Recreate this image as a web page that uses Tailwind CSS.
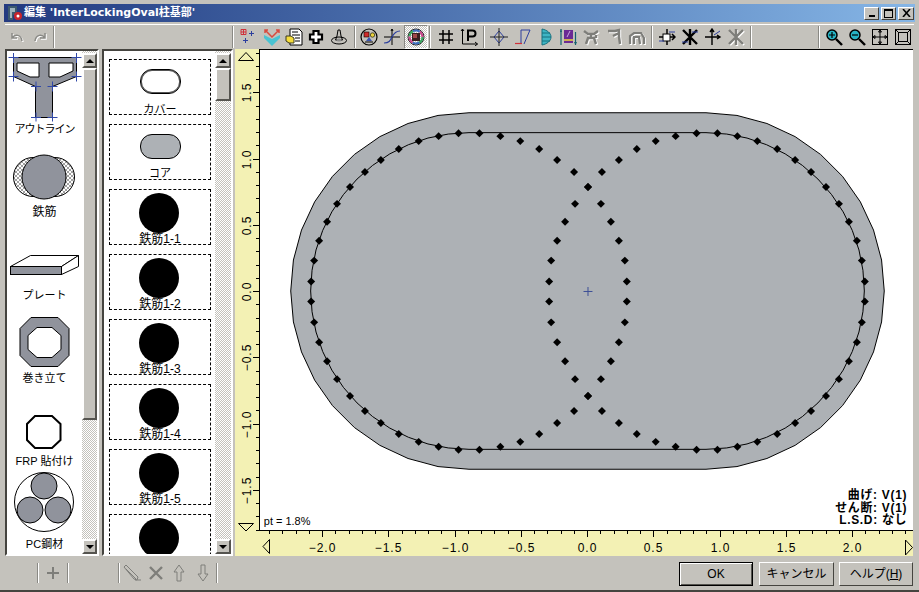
<!DOCTYPE html>
<html lang="ja">
<head>
  <meta charset="UTF-8">
  <title>編集 'InterLockingOval柱基部'</title>
  <script src="https://cdn.jsdelivr.net/npm/@tailwindcss/browser@4"></script>
</head>
<body class="w-[919px] h-[592px] overflow-hidden bg-[#c4c2bc] font-['Liberation_Sans','Noto_Sans_CJK_JP',sans-serif] text-black">
  <div class="w-[919px] h-[592px] flex flex-col px-[5px] pt-[4px] border-b-2 border-[#45443f]">

    <!-- Title bar -->
    <div class="h-[18px] -mx-[1px] flex items-center bg-linear-to-r from-[#233a80] to-[#86b6e6]">
      <svg class="ml-[3px] w-[16px] h-[16px]" viewBox="0 0 16 16">
        <path d="M1 1h9v9H6v5H1z" fill="#3d5a6e"/>
        <path d="M3 3h5v4H5v6H3z" fill="#9fb4bd"/>
        <circle cx="11" cy="11" r="4" fill="#c8242c"/>
        <circle cx="11" cy="11" r="1.5" fill="#fff"/>
      </svg>
      <span class="ml-[1px] text-[11px] font-bold text-white font-['DejaVu_Sans','Noto_Sans_CJK_JP',sans-serif]">編集 'InterLockingOval柱基部'</span>
      <div class="ml-auto mr-[1px] flex items-center gap-[2px]">
        <div class="w-[15px] h-[13px] flex items-end justify-center pb-[2px] bg-[#c4c2bc] border border-t-white border-l-white border-r-[#45443f] border-b-[#45443f]"><div class="w-[6px] h-[2px] bg-black"></div></div>
        <div class="w-[15px] h-[13px] flex items-center justify-center bg-[#c4c2bc] border border-t-white border-l-white border-r-[#45443f] border-b-[#45443f]"><div class="w-[9px] h-[9px] border border-t-2 border-black"></div></div>
        <div class="w-[16px] h-[13px] flex items-center justify-center bg-[#c4c2bc] border border-t-white border-l-white border-r-[#45443f] border-b-[#45443f]">
          <svg class="w-[9px] h-[8px]" viewBox="0 0 9 8"><path d="M1 0l7 8M8 0L1 8" stroke="#000" stroke-width="1.6"/></svg>
        </div>
      </div>
    </div>

    <!-- Top toolbar -->
    <div class="h-[25px] mt-[2px] flex items-center border-t border-white">
      <div class="w-[24px] flex justify-center"><svg class="w-[18px] h-[18px]" viewBox="0 0 18 18" fill="none" stroke-width="1.5"><path d="M4 5v5h5M4 10c3-4 9-4 10 3" stroke="#fff" transform="translate(1 1)"/><path d="M4 5v5h5M4 10c3-4 9-4 10 3" stroke="#8a8a86"/></svg></div>
      <div class="w-[23px] flex justify-center"><svg class="w-[18px] h-[18px]" viewBox="0 0 18 18" fill="none" stroke-width="1.5"><path d="M14 5v5H9M14 10c-3-4-9-4-10 3" stroke="#fff" transform="translate(1 1)"/><path d="M14 5v5H9M14 10c-3-4-9-4-10 3" stroke="#8a8a86"/></svg></div>
      <div class="ml-[1px] w-[2px] h-[22px] bg-[#8a8984] border-r border-white"></div>
      <div class="w-[178px]"></div>
      <div class="w-[2px] h-[22px] bg-[#8a8984] border-r border-white"></div>

      <div class="ml-[3px] w-[23px] flex justify-center"><svg class="w-[18px] h-[18px]" viewBox="0 0 18 18" fill="none"><path d="M1 1.500h5v5H1zM3.500 1v5M1 4h5" stroke="#d0313a"/><path d="M9 5.500h5M11.500 3v5M3 12.500h5M5.500 10v5" stroke="#2c3f9e"/></svg></div>
      <div class="w-[23px] flex justify-center"><svg class="w-[18px] h-[18px]" viewBox="0 0 18 18"><path d="M1 7l8 4 8-4v3l-8 8-8-8z" fill="#49c3d2"/><path d="M2 5V2h3M2 2l7 7 7-7M13 2h3v3" stroke="#d94a3e" stroke-width="1.5" fill="none"/></svg></div>
      <div class="w-[22px] flex justify-center"><svg class="w-[18px] h-[18px]" viewBox="0 0 18 18"><path d="M5 1h9l3 3v13H5z" fill="#fff" stroke="#000"/><path d="M7 4h6M7 7h8M10 10h5M10 13h5" stroke="#000"/><path d="M1 8h5l3 2v5H4l-3-2z" fill="#f5dc3b" stroke="#3a3a20"/></svg></div>
      <div class="w-[23px] flex justify-center"><svg class="w-[18px] h-[18px]" viewBox="0 0 18 18"><path d="M6.500 3h5v3.500H15v5h-3.500V15h-5v-3.500H3v-5h3.500z" fill="#fff" stroke="#000" stroke-width="2.200"/></svg></div>
      <div class="w-[23px] flex justify-center"><svg class="w-[18px] h-[18px]" viewBox="0 0 18 18" fill="none" stroke="#000"><ellipse cx="9" cy="12.500" rx="7.500" ry="3.500"/><path d="M8 2h2l1 6 1.500 4h-7L7 8z"/><ellipse cx="9" cy="12" rx="2.500" ry="1.500" fill="#8c8c8c" stroke="none"/></svg></div>
      <div class="ml-[3px] w-[2px] h-[22px] bg-[#8a8984] border-r border-white"></div>

      <div class="ml-[2px] w-[23px] flex justify-center"><svg class="w-[18px] h-[18px]" viewBox="0 0 18 18"><circle cx="9" cy="9" r="8" fill="#c4c2bc" stroke="#000" stroke-width="1.200"/><rect x="4" y="4" width="5" height="5" fill="#d02c2c" stroke="#000" stroke-width=".6"/><circle cx="12.500" cy="7" r="2.200" fill="#e8d23c" stroke="#000" stroke-width=".6"/><path d="M9 9l3 4H6z" fill="#3a55b0"/><path d="M5 14h8" stroke="#000"/></svg></div>
      <div class="w-[23px] flex justify-center"><svg class="w-[18px] h-[18px]" viewBox="0 0 18 18" fill="none"><path d="M9 17V1M8 3l1-2 1 2M1 9h16" stroke="#000"/><path d="M1 15c5 0 6-2 8-6s4-6 8-6" stroke="#2c3f9e" stroke-width="1.200"/></svg></div>
      <div class="w-[24px] h-[24px] flex items-center justify-center border border-t-[#8a8984] border-l-[#8a8984] border-b-white border-r-white bg-[repeating-conic-gradient(#c4c2bc_0_25%,#fff_0_50%)] bg-[length:2px_2px]"><svg class="w-[18px] h-[18px]" viewBox="0 0 18 18"><circle cx="9" cy="9" r="8" fill="none" stroke="#222" stroke-width="1"/><circle cx="9" cy="9" r="6.500" fill="none" stroke="#3aa860" stroke-width="2.200" stroke-dasharray="7 13.400"/><circle cx="9" cy="9" r="6.500" fill="none" stroke="#c84a8c" stroke-width="2.200" stroke-dasharray="7 13.400" stroke-dashoffset="7"/><circle cx="9" cy="9" r="6.500" fill="none" stroke="#3f6fc0" stroke-width="2.200" stroke-dasharray="7 13.400" stroke-dashoffset="14"/><rect x="5" y="5" width="8" height="8" fill="#3a2020"/><rect x="6" y="6" width="4" height="4" fill="#a04848"/></svg></div>
      <div class="ml-[1px] w-[2px] h-[22px] bg-[#8a8984] border-r border-white"></div>

      <div class="ml-[3px] w-[24px] flex justify-center"><svg class="w-[18px] h-[18px]" viewBox="0 0 18 18" fill="none" stroke="#000" stroke-width="1.500"><path d="M6 2v14M12 2v14M2 6h14M2 12h14"/></svg></div>
      <div class="w-[23px] flex justify-center"><svg class="w-[18px] h-[18px]" viewBox="0 0 18 18" fill="none" stroke="#000"><path d="M2.500 1v15h15M1 3l1.500-2L4 3M15 14l2.500 2-2.500 2"/><path d="M8 13V2.500h4.500a2.500 2.500 0 0 1 0 6H8" stroke-width="2"/></svg></div>
      <div class="ml-[3px] w-[2px] h-[22px] bg-[#8a8984] border-r border-white"></div>

      <div class="ml-[2px] w-[24px] flex justify-center"><svg class="w-[18px] h-[18px]" viewBox="0 0 18 18" fill="none" stroke="#2c3f9e"><path d="M9 3l5 6-5 6-5-6z"/><path d="M9 0v18M0 9h18" stroke="#222"/></svg></div>
      <div class="w-[24px] flex justify-center"><svg class="w-[18px] h-[18px]" viewBox="0 0 18 18" fill="none"><path d="M7 2h9M16 2l-6 14M7 2v14" stroke="#2c3f9e"/><path d="M1 15.500h7" stroke="#d0313a" stroke-width="1.200"/></svg></div>
      <div class="w-[22px] flex justify-center"><svg class="w-[18px] h-[18px]" viewBox="0 0 18 18"><path d="M5 1c5 1 9 4 9 8s-4 7-9 8z" fill="#3fb5c4" stroke="#16707e"/><path d="M5 5h8M5 9h9M5 13h8" stroke="#16707e"/></svg></div>
      <div class="w-[22px] flex justify-center"><svg class="w-[18px] h-[18px]" viewBox="0 0 18 18"><rect x="5" y="2" width="9" height="13" fill="#6b2a94"/><path d="M5 12h9" stroke="#f0dc3c" stroke-width="1.500"/><path d="M11 3L8 9" stroke="#c8a8e0"/><path d="M2 1v16M16.500 4v13" stroke="#14606e" stroke-width="1.200"/><path d="M1 4l1-3 1 3M15 14l1.500 3 1.500-3" fill="#14606e"/></svg></div>
      <div class="w-[24px] flex justify-center"><svg class="w-[18px] h-[18px]" viewBox="0 0 18 18" fill="none" stroke-width="2.400"><path d="M2 3l4 3h6l4-3M9 6v5M4 16l2-6h6l2 6M14 7v3" stroke="#fff" transform="translate(1 1)"/><path d="M2 3l4 3h6l4-3M9 6v5M4 16l2-6h6l2 6M14 7v3" stroke="#7e7e7a"/></svg></div>
      <div class="w-[23px] flex justify-center"><svg class="w-[18px] h-[18px]" viewBox="0 0 18 18" fill="none" stroke-width="2.400"><path d="M2 3h7l4-1v7l1 7M13 5L7 8" stroke="#fff" transform="translate(1 1)"/><path d="M2 3h7l4-1v7l1 7M13 5L7 8" stroke="#7e7e7a"/></svg></div>
      <div class="w-[23px] flex justify-center"><svg class="w-[18px] h-[18px]" viewBox="0 0 18 18" fill="none" stroke-width="2.200"><path d="M2 16V8l4-3h7l3 5v6M6 16V9h5l1 7" stroke="#fff" transform="translate(1 1)"/><path d="M2 16V8l4-3h7l3 5v6M6 16V9h5l1 7" stroke="#7e7e7a"/></svg></div>
      <div class="ml-[2px] w-[2px] h-[22px] bg-[#8a8984] border-r border-white"></div>

      <div class="ml-[2px] w-[24px] flex justify-center"><svg class="w-[18px] h-[18px]" viewBox="0 0 18 18" fill="none"><path d="M9 1v16M1 9h16M14 6l3 3-3 3" stroke="#000" stroke-width="1.500"/><rect x="5" y="6" width="7" height="7" fill="#fff" stroke="#000"/><path d="M1 13h5M11 4h6" stroke="#2c3f9e"/></svg></div>
      <div class="w-[23px] flex justify-center"><svg class="w-[18px] h-[18px]" viewBox="0 0 18 18" fill="none"><path d="M2 2l14 14M16 2L2 16M9 1v16" stroke="#000" stroke-width="2.400"/><path d="M1 14h6M11 4h6" stroke="#2c3f9e"/></svg></div>
      <div class="w-[23px] flex justify-center"><svg class="w-[18px] h-[18px]" viewBox="0 0 18 18" fill="none"><path d="M8 2v15M1 9h14M13 7l3 2-3 2M6 4l2-3 2 3" stroke="#000" stroke-width="1.400"/><path d="M10 7l6-4" stroke="#2c3f9e"/></svg></div>
      <div class="w-[23px] flex justify-center"><svg class="w-[18px] h-[18px]" viewBox="0 0 18 18" fill="none" stroke-width="2.400"><path d="M2 2l14 14M16 2L2 16M9 1v16" stroke="#fff" transform="translate(1 1)"/><path d="M2 2l14 14M16 2L2 16M9 1v16" stroke="#7e7e7a"/></svg></div>
      <div class="ml-[2px] w-[2px] h-[22px] bg-[#8a8984] border-r border-white"></div>
      <div class="w-[67px]"></div>
      <div class="w-[2px] h-[22px] bg-[#8a8984] border-r border-white"></div>

      <div class="ml-[2px] w-[23px] flex justify-center"><svg class="w-[18px] h-[18px]" viewBox="0 0 18 18" fill="none"><circle cx="7" cy="7" r="5" fill="#27b3c4" stroke="#000" stroke-width="1.500"/><path d="M11 11l6 6" stroke="#000" stroke-width="2.400"/><path d="M4 7h6M7 4v6" stroke="#000" stroke-width="1.200"/></svg></div>
      <div class="w-[23px] flex justify-center"><svg class="w-[18px] h-[18px]" viewBox="0 0 18 18" fill="none"><circle cx="7" cy="7" r="5" fill="#27b3c4" stroke="#000" stroke-width="1.500"/><path d="M11 11l6 6" stroke="#000" stroke-width="2.400"/><path d="M4 7h6" stroke="#000" stroke-width="1.200"/></svg></div>
      <div class="w-[23px] flex justify-center"><svg class="w-[16px] h-[16px]" viewBox="0 0 16 16" fill="none" stroke="#000"><rect x=".5" y=".5" width="15" height="15"/><path d="M8 1v14M1 8h14M8 1L6.500 3h3zM8 15l-1.500-2h3zM1 8l2-1.500v3zM15 8l-2-1.500v3z"/></svg></div>
      <div class="w-[23px] flex justify-center"><svg class="w-[16px] h-[16px]" viewBox="0 0 16 16" fill="none" stroke="#000"><rect x=".5" y=".5" width="15" height="15"/><rect x="3.500" y="3.500" width="9" height="9"/><path d="M1 1l3 3M15 1l-3 3M1 15l3-3M15 15l-3-3"/></svg></div>
    </div>

    <!-- Panes -->
    <div class="h-[507px] flex">
      <!-- Shape palette -->
      <div class="w-[94px] flex border-2 border-t-[#45443f] border-l-[#45443f] border-b-white border-r-white">
        <div class="w-[75px] bg-white overflow-hidden text-[11px] text-center leading-[13px]">
          <div class="h-[83px]">
            <svg class="block w-[75px] h-[72px]" viewBox="7 51 75 72">
              <path d="M13.500 57.500h63v19l-24 10v31h-17v-31l-22-10z" fill="#90939c" stroke="#000"/>
              <path d="M17 63h22v14h-9l-13-6zM49 63h24v8l-13 6H49z" fill="#fff" stroke="#000"/>
              <path d="M13.500 53v10M8.500 57.500h10M76.500 53v10M71.500 57.500h10M13.500 71.500v10M8.500 76.500h10M76.500 71.500v10M71.500 76.500h10M36 81.500v10M31 86.500h10M52.500 81.500v10M47.500 86.500h10M36 112.500v9M31 117.500h10M52.500 112.500v9M47.500 117.500h10" stroke="#3048a8"/>
            </svg>
            <div class="tracking-[-1px]">アウトライン</div>
          </div>
          <div class="h-[83px]">
            <svg class="block w-[75px] h-[72px]" viewBox="7 134 75 72">
              <defs><pattern id="hatch" width="4" height="4" patternUnits="userSpaceOnUse"><path d="M0 0l4 4M4 0L0 4" stroke="#777" stroke-width=".7"/></pattern></defs>
              <circle cx="33" cy="177" r="19.500" fill="url(#hatch)" stroke="#000"/>
              <circle cx="55" cy="177" r="19.500" fill="url(#hatch)" stroke="#000"/>
              <circle cx="44" cy="177" r="22" fill="#90939c" stroke="#000"/>
            </svg>
            <div class="text-[12px]">鉄筋</div>
          </div>
          <div class="h-[83px]">
            <svg class="block w-[75px] h-[72px]" viewBox="7 217 75 72">
              <path d="M10.500 266.500l20-11h48l-17 11z" fill="#fff" stroke="#000"/>
              <path d="M61.500 266.500l17-11v11l-17 8z" fill="#fff" stroke="#000"/>
              <rect x="10.500" y="266.500" width="51" height="8" fill="#90939c" stroke="#000"/>
            </svg>
            <div>プレート</div>
          </div>
          <div class="h-[83px]">
            <svg class="block w-[75px] h-[72px]" viewBox="7 300 75 72">
              <path d="M31 317.500h27l11 11v27l-11 11H31l-11-11v-27z" fill="#90939c" stroke="#000"/>
              <path d="M37 327.500h15l9 8v14l-9 8H37l-9-8v-14z" fill="#fff" stroke="#000"/>
            </svg>
            <div>巻き立て</div>
          </div>
          <div class="h-[83px]">
            <svg class="block w-[75px] h-[72px]" viewBox="7 383 75 72">
              <path d="M35 416h17l8.500 8v16l-8.500 8H35l-8-8v-16z" fill="#fff" stroke="#000" stroke-width="2"/>
            </svg>
            <div>FRP 貼付け</div>
          </div>
          <div class="h-[83px]">
            <svg class="block w-[75px] h-[72px]" viewBox="7 466 75 72">
              <circle cx="44" cy="502" r="29.500" fill="#fff" stroke="#000"/>
              <circle cx="44" cy="486" r="13" fill="#90939c" stroke="#000"/>
              <circle cx="30" cy="510" r="13" fill="#90939c" stroke="#000"/>
              <circle cx="58" cy="510" r="13" fill="#90939c" stroke="#000"/>
            </svg>
            <div>PC鋼材</div>
          </div>
        </div>
        <div class="w-[15px] bg-[repeating-conic-gradient(#c4c2bc_0_25%,#fff_0_50%)] bg-[length:2px_2px] flex flex-col pt-[2px]">
          <div class="h-[15px] flex items-center justify-center bg-[#c4c2bc] border-2 border-t-white border-l-white border-r-[#55544f] border-b-[#55544f]"><div class="w-0 h-0 border-x-[4px] border-x-transparent border-b-[4px] border-b-black"></div></div>
          <div class="h-[352px] bg-[#c4c2bc] border-2 border-t-white border-l-white border-r-[#55544f] border-b-[#55544f]"></div>
          <div class="mt-auto h-[15px] flex items-center justify-center bg-[#c4c2bc] border-2 border-t-white border-l-white border-r-[#55544f] border-b-[#55544f]"><div class="w-0 h-0 border-x-[4px] border-x-transparent border-t-[4px] border-t-black"></div></div>
        </div>
      </div>

      <!-- Section parts list -->
      <div class="ml-[3px] w-[131px] flex border-2 border-t-[#45443f] border-l-[#45443f] border-b-white border-r-white">
        <div class="w-[111px] bg-white overflow-hidden pt-[8px] pl-[5px] flex flex-col gap-[9px] text-[12px] text-center leading-[13px]">
          <div class="shrink-0 w-[102px] h-[56px] border border-dashed border-black flex flex-col items-center">
            <div class="shrink-0 mt-[9px] w-[41px] h-[25px] rounded-[12px] bg-white border border-black shadow-[inset_0_0_0_1px_#555]"></div>
            <div class="shrink-0 mt-[9px] text-[11px]">カバー</div>
          </div>
          <div class="shrink-0 w-[102px] h-[56px] border border-dashed border-black flex flex-col items-center">
            <div class="shrink-0 mt-[9px] w-[41px] h-[25px] rounded-[12px] bg-[#adb1b5] border border-black"></div>
            <div class="shrink-0 mt-[8px] text-[11px]">コア</div>
          </div>
          <div class="shrink-0 w-[102px] h-[56px] border border-dashed border-black flex flex-col items-center">
            <div class="shrink-0 mt-[3px] mr-[2px] w-[40px] h-[40px] rounded-full bg-black"></div>
            <div class="shrink-0">鉄筋1-1</div>
          </div>
          <div class="shrink-0 w-[102px] h-[56px] border border-dashed border-black flex flex-col items-center">
            <div class="shrink-0 mt-[3px] mr-[2px] w-[40px] h-[40px] rounded-full bg-black"></div>
            <div class="shrink-0">鉄筋1-2</div>
          </div>
          <div class="shrink-0 w-[102px] h-[56px] border border-dashed border-black flex flex-col items-center">
            <div class="shrink-0 mt-[3px] mr-[2px] w-[40px] h-[40px] rounded-full bg-black"></div>
            <div class="shrink-0">鉄筋1-3</div>
          </div>
          <div class="shrink-0 w-[102px] h-[56px] border border-dashed border-black flex flex-col items-center">
            <div class="shrink-0 mt-[3px] mr-[2px] w-[40px] h-[40px] rounded-full bg-black"></div>
            <div class="shrink-0">鉄筋1-4</div>
          </div>
          <div class="shrink-0 w-[102px] h-[56px] border border-dashed border-black flex flex-col items-center">
            <div class="shrink-0 mt-[3px] mr-[2px] w-[40px] h-[40px] rounded-full bg-black"></div>
            <div class="shrink-0">鉄筋1-5</div>
          </div>
          <div class="shrink-0 w-[102px] h-[56px] border border-dashed border-black flex flex-col items-center">
            <div class="shrink-0 mt-[3px] mr-[2px] w-[40px] h-[40px] rounded-full bg-black"></div>
          </div>
        </div>
        <div class="w-[16px] bg-[repeating-conic-gradient(#c4c2bc_0_25%,#fff_0_50%)] bg-[length:2px_2px] flex flex-col pt-[2px]">
          <div class="h-[15px] flex items-center justify-center bg-[#c4c2bc] border-2 border-t-white border-l-white border-r-[#55544f] border-b-[#55544f]"><div class="w-0 h-0 border-x-[4px] border-x-transparent border-b-[4px] border-b-black"></div></div>
          <div class="h-[33px] bg-[#c4c2bc] border-2 border-t-white border-l-white border-r-[#55544f] border-b-[#55544f]"></div>
          <div class="mt-auto h-[15px] flex items-center justify-center bg-[#c4c2bc] border-2 border-t-white border-l-white border-r-[#55544f] border-b-[#55544f]"><div class="w-0 h-0 border-x-[4px] border-x-transparent border-t-[4px] border-t-black"></div></div>
        </div>
      </div>

      <!-- Drawing with rulers -->
      <div class="ml-[2px] w-[678px] flex flex-col bg-[#f3f1b4]">
        <div class="h-[482px] flex">
          <svg id="rulerY" class="block w-[24px] h-[482px]" viewBox="235 49 24 482"></svg>
          <svg id="canvas" class="block w-[654px] h-[482px] bg-white border-t border-l border-b border-black" viewBox="259 49 654 482"></svg>
        </div>
        <svg id="rulerX" class="block w-[678px] h-[25px]" viewBox="235 531 678 25"></svg>
      </div>
    </div>

    <!-- Bottom bar -->
    <div class="h-[34px] flex items-center">
      <div class="ml-[32px] w-[2px] h-[20px] bg-[#8a8984] border-r border-white"></div>
      <div class="w-[28px] flex justify-center"><svg class="w-[14px] h-[14px]" viewBox="0 0 14 14"><path d="M7 1v12M1 7h12" stroke="#7e7e7a" stroke-width="2"/></svg></div>
      <div class="w-[2px] h-[20px] bg-[#8a8984] border-r border-white"></div>
      <div class="w-[49px]"></div>
      <div class="w-[2px] h-[20px] bg-[#8a8984] border-r border-white"></div>
      <div class="w-[24px] flex justify-center"><svg class="w-[18px] h-[18px]" viewBox="0 0 18 18" fill="none" stroke="#7e7e7a"><path d="M1 3l2-2 12 12-1 3-3-1zM12 16h6M3 5l10 10"/></svg></div>
      <div class="w-[23px] flex justify-center"><svg class="w-[16px] h-[16px]" viewBox="0 0 16 16"><path d="M2 2l12 12M14 2L2 14" stroke="#7e7e7a" stroke-width="2.400"/></svg></div>
      <div class="w-[24px] flex justify-center"><svg class="w-[12px] h-[18px]" viewBox="0 0 12 18"><path d="M6 1l5 7H8v9H4V8H1z" fill="#c4c2bc" stroke="#7e7e7a"/></svg></div>
      <div class="w-[23px] flex justify-center"><svg class="w-[12px] h-[18px]" viewBox="0 0 12 18"><path d="M6 17l5-7H8V1H4v9H1z" fill="#c4c2bc" stroke="#7e7e7a"/></svg></div>
      <div class="ml-[2px] w-[2px] h-[20px] bg-[#8a8984] border-r border-white"></div>

      <div class="ml-auto mr-[1px] mt-[1px] flex items-center text-[12px]">
        <button class="w-[74px] h-[24px] bg-[#c4c2bc] border border-black shadow-[inset_1px_1px_0_#fff,inset_-1px_-1px_0_#55544f]">OK</button>
        <button class="ml-[6px] w-[75px] h-[24px] bg-[#c4c2bc] border border-t-white border-l-white border-r-[#45443f] border-b-[#45443f]">キャンセル</button>
        <button class="ml-[5px] w-[74px] h-[24px] bg-[#c4c2bc] border border-t-white border-l-white border-r-[#45443f] border-b-[#45443f]">ヘルプ(<u>H</u>)</button>
      </div>
    </div>
  </div>

  <script>
    // Section geometry, in page pixels
    const CX = 587, CY = 291, UNIT = 132.5;
    const LEFT = 468, RIGHT = 706;
    const OUTER_R = 179, INNER_R = 159;

    function arcPoints(cx, r, from, to, step) {
      const pts = [];
      for (let a = from; a <= to; a += step) {
        const t = a * Math.PI / 180;
        pts.push((cx + r * Math.sin(t)).toFixed(1) + "," + (CY - r * Math.cos(t)).toFixed(1));
      }
      return pts;
    }

    function dot(x, y) {
      return `<path d="M${x} ${y - 4}l4 4-4 4-4-4z"/>`;
    }

    function drawCanvas() {
      const outer = arcPoints(RIGHT, OUTER_R, 0, 180, 10).concat(arcPoints(LEFT, OUTER_R, 180, 360, 10)).join(" ");
      const inner = arcPoints(RIGHT, INNER_R, 0, 180, 7.5).concat(arcPoints(LEFT, INNER_R, 180, 360, 7.5)).join(" ");
      let s = `<polygon points="${outer}" fill="#adb1b5" stroke="#000"/>`;
      s += `<polygon points="${inner}" fill="none" stroke="#000"/>`;
      for (let k = 0; k < 48; k++) {
        const t = (3.75 + 7.5 * k) * Math.PI / 180;
        const x = Math.round(467.7 + INNER_R * Math.sin(t));
        const y = Math.round(CY - INNER_R * Math.cos(t)) + 0.5;
        s += dot(x + 0.5, y) + dot(CX * 2 - x + 0.5, y);
      }
      s += `<path d="M${CX - 4} ${CY + .5}h9M${CX + .5} ${CY - 4}v9" stroke="#3c4f96" fill="none"/>`;
      s += `<text x="262" y="526" font-size="11">pt = 1.8%</text>`;
      s += `<g font-size="12" font-weight="700" letter-spacing=".7" text-anchor="end">
        <text x="908" y="500">曲げ: V(1)</text>
        <text x="908" y="512.500">せん断: V(1)</text>
        <text x="908" y="525">L.S.D: なし</text>
      </g>`;
      document.getElementById("canvas").innerHTML = s;
    }

    function drawRulers() {
      let y = `<path d="M238.500 60.500h15L246 52.500zM238.500 523.500h15L246 531z" fill="none" stroke="#000"/>`;
      for (let i = -18; i <= 18; i++) {
        const p = Math.round(CY - i * UNIT / 10) + 0.5;
        const len = i % 5 === 0 ? 6 : 3;
        y += `<path d="M${259 - len} ${p}h${len}" stroke="#000"/>`;
        if (i % 5 === 0) {
          const label = (i < 0 ? "−" : "") + (Math.abs(i) / 10).toFixed(1);
          y += `<text transform="translate(251 ${p}) rotate(-90)" font-size="12" letter-spacing="1" text-anchor="middle">${label}</text>`;
        }
      }
      document.getElementById("rulerY").innerHTML = y;

      let x = `<path d="M269.500 539.500v14L263 546.500zM905.500 540v15l7-7.500z" fill="none" stroke="#000"/>`;
      for (let i = -24; i <= 24; i++) {
        const p = Math.round(CX + i * UNIT / 10) + 0.5;
        const len = i % 5 === 0 ? 6 : 3;
        x += `<path d="M${p} 531v${len}" stroke="#000"/>`;
        if (i % 5 === 0) {
          const label = (i < 0 ? "−" : "") + (Math.abs(i) / 10).toFixed(1);
          x += `<text x="${p}" y="552" font-size="12" letter-spacing="1" text-anchor="middle">${label}</text>`;
        }
      }
      document.getElementById("rulerX").innerHTML = x;
    }

    drawCanvas();
    drawRulers();
  </script>
</body>
</html>
